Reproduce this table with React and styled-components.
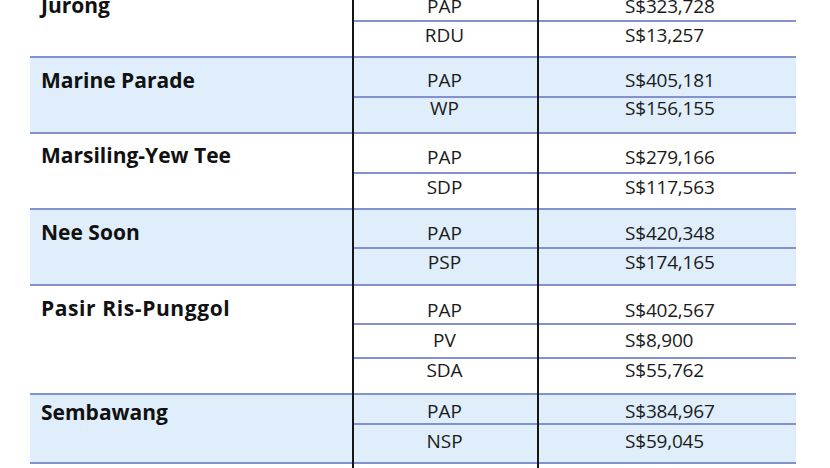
import React from "react";
import styled, { createGlobalStyle } from "styled-components";

const GlobalStyle = createGlobalStyle`
  html, body { margin: 0; padding: 0; background: #ffffff; }
  body { overflow: hidden; }
`;

const LINE = "#8391cf";
const RULE = "#151515";
const TINT = "#dfeefa";

const Viewport = styled.div`
  width: 830px;
  height: 468px;
  overflow: hidden;
  background: #ffffff;
`;

const Table = styled.div`
  width: 766px;
  margin: -16px 0 0 30px;
  display: flex;
  flex-direction: column;
  font-family: "Open Sans", "Noto Sans", sans-serif;
  color: #111111;
`;

const Group = styled.div`
  display: flex;
  background: ${(p) => (p.$tint ? TINT : "#ffffff")};
`;

const NameCell = styled.div`
  width: 322px;
  box-sizing: border-box;
  padding: ${(p) => p.$pad}px 0 0 11px;
  font-size: 21px;
  line-height: 24px;
  font-weight: 700;
  letter-spacing: ${(p) => p.$track || 0}px;
  box-shadow: inset 0 -2px 0 ${LINE};
`;

const Parties = styled.div`
  width: 444px;
  display: flex;
  flex-direction: column;
`;

const Sub = styled.div`
  display: grid;
  grid-template-columns: 185px 259px;
  height: ${(p) => p.$h}px;
`;

const Cell = styled.div`
  box-sizing: border-box;
  border-left: 2px solid ${RULE};
  box-shadow: inset 0 -2px 0 ${LINE};
  padding-top: ${(p) => p.$pad}px;
  font-size: 19px;
  line-height: 20px;
  font-weight: 400;
  color: #1a1a1a;
  white-space: nowrap;
`;

const PartyCell = styled(Cell)`
  text-align: center;
  padding-right: 2px;
`;

const AmountCell = styled(Cell)`
  padding-left: 86px;
  letter-spacing: -0.2px;
`;

const Tail = styled.div`
  display: grid;
  grid-template-columns: 322px 185px 259px;
  height: 24px;
`;

const TailCell = styled.div`
  border-left: ${(p) => (p.$rule ? `2px solid ${RULE}` : "none")};
`;

const groups = [
  {
    name: "Jurong",
    pad: 9,
    rows: [
      { party: "PAP", amount: "S$323,728", h: 38, pad: 11.5 },
      { party: "RDU", amount: "S$13,257", h: 36, pad: 2.5 },
    ],
  },
  {
    name: "Marine Parade",
    tint: true,
    pad: 9.5,
    rows: [
      { party: "PAP", amount: "S$405,181", h: 40, pad: 11.5 },
      { party: "WP", amount: "S$156,155", h: 36, pad: 0 },
    ],
  },
  {
    name: "Marsiling-Yew Tee",
    pad: 9,
    rows: [
      { party: "PAP", amount: "S$279,166", h: 40, pad: 13 },
      { party: "SDP", amount: "S$117,563", h: 36, pad: 3 },
    ],
  },
  {
    name: "Nee Soon",
    tint: true,
    pad: 9.5,
    rows: [
      { party: "PAP", amount: "S$420,348", h: 39, pad: 13 },
      { party: "PSP", amount: "S$174,165", h: 37, pad: 3 },
    ],
  },
  {
    name: "Pasir Ris-Punggol",
    pad: 9.5,
    track: 0.6,
    rows: [
      { party: "PAP", amount: "S$402,567", h: 39, pad: 14 },
      { party: "PV", amount: "S$8,900", h: 34, pad: 4.5 },
      { party: "SDA", amount: "S$55,762", h: 36, pad: 0.5 },
    ],
  },
  {
    name: "Sembawang",
    tint: true,
    pad: 5,
    rows: [
      { party: "PAP", amount: "S$384,967", h: 30, pad: 6 },
      { party: "NSP", amount: "S$59,045", h: 39, pad: 5.5 },
    ],
  },
];

export default function App() {
  return (
    <Viewport>
      <GlobalStyle />
      <Table>
        {groups.map((g) => (
          <Group key={g.name} $tint={g.tint}>
            <NameCell $pad={g.pad} $track={g.track}>
              {g.name}
            </NameCell>
            <Parties>
              {g.rows.map((r) => (
                <Sub key={r.party} $h={r.h}>
                  <PartyCell $pad={r.pad}>{r.party}</PartyCell>
                  <AmountCell $pad={r.pad}>{r.amount}</AmountCell>
                </Sub>
              ))}
            </Parties>
          </Group>
        ))}
        <Tail>
          <TailCell />
          <TailCell $rule />
          <TailCell $rule />
        </Tail>
      </Table>
    </Viewport>
  );
}
